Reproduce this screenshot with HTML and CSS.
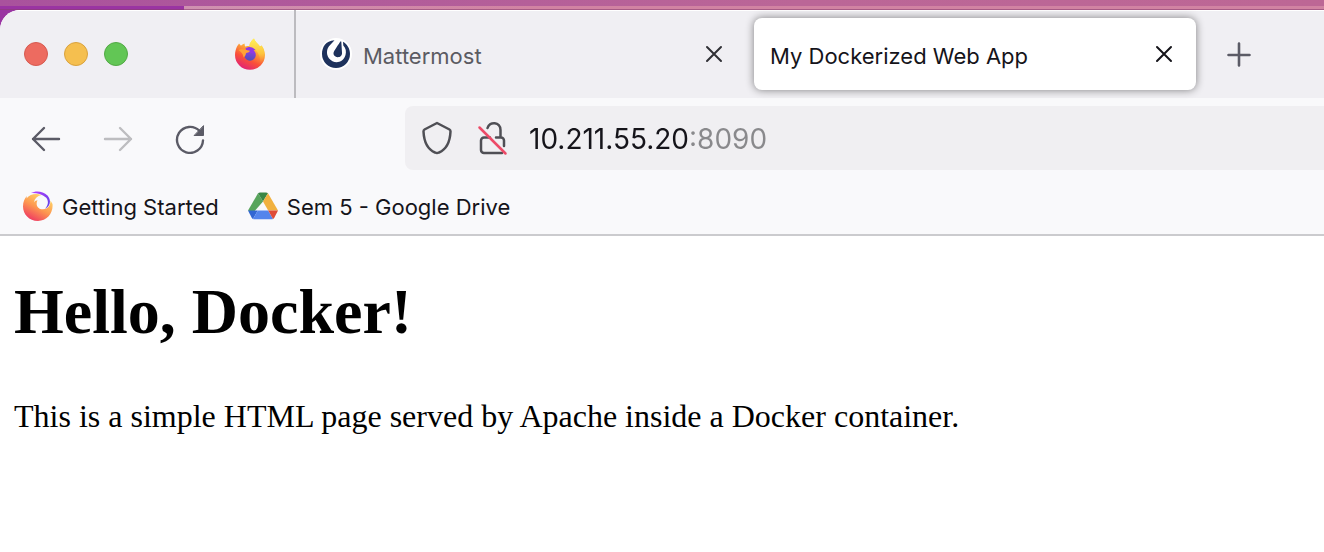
FILE: index.html
```html
<!DOCTYPE html>
<html lang="en">
<head>
<meta charset="utf-8">
<title>My Dockerized Web App</title>
<link rel="stylesheet" href="styles.css">
</head>
<body>
<div class="desktop">
<div class="menubar"></div>
<div class="wallpaper"></div>
<div class="window">
  <header class="tabbar">
    <div class="lights">
      <button class="light red" aria-label="Close window"></button>
      <button class="light yellow" aria-label="Minimize window"></button>
      <button class="light green" aria-label="Zoom window"></button>
    </div>
    <button class="pinned" aria-label="Firefox">
      <svg width="32" height="32" viewBox="-1 0 32 32">
        <defs>
          <linearGradient id="fox" x1="0.8" y1="0" x2="0.3" y2="1"><stop offset="0" stop-color="#fff04f"/><stop offset=".35" stop-color="#fdb13a"/><stop offset=".68" stop-color="#fa5138"/><stop offset="1" stop-color="#e0207a"/></linearGradient>
          <linearGradient id="globe" x1="0.6" y1="0" x2="0.4" y2="1"><stop offset="0" stop-color="#9a3cea"/><stop offset="1" stop-color="#4b50b8"/></linearGradient>
          <linearGradient id="flame" x1="0" y1="0" x2="0" y2="1"><stop offset="0" stop-color="#fff15a"/><stop offset=".6" stop-color="#fdc33c"/><stop offset="1" stop-color="#fb8636" stop-opacity="0"/></linearGradient>
        </defs>
        <path fill="url(#fox)" d="M3 8.500C4 7 4.500 6.500 5 5.500L7 7.800C8 6.800 9 6 10.500 5.500L11 8.500C13 7.500 14 8 15.500 8C15.500 5 17.500 2.500 20 .5C21 4 24 5.500 26 8.500L27.500 7.500C29 9 31 13 31 17A15 14.800 0 0 1 1 17C1 13.500 2 10.500 3 8.500Z"/>
        <path fill="url(#flame)" d="M15.500 8C15.500 5 17.500 2.500 20 .5C21 4 24 5.500 26 8.500L27.500 7.500C31 12 31 20 26 26C27 20 24 13 20 11C17 10 15.500 9.500 15.500 8Z"/>
        <circle cx="16" cy="17" r="5.800" fill="url(#globe)"/>
        <path fill="#9038e6" d="M11.500 10.500C14 8.200 18 8.500 20.500 11L21.500 12L19.500 12.300L21.500 15.500L13 14.500Z"/>
        <path fill="#ffa436" d="M4.500 12C8 10.500 11 12 16 12.700C15.500 14.500 13 14.500 12 15.200C11.700 17.500 10.700 18.500 9.500 19.500C9.500 16 7 14 4.500 12Z"/>
      </svg>
    </button>
    <div class="tab">
      <svg class="favicon" width="32" height="32" viewBox="0 0 32 32">
        <circle cx="16" cy="16" r="16" fill="#fff"/>
        <path fill="#1e325c" d="M14.500 2.300C5.500 2.700 2 9.500 2 16A14 14 0 0 0 30 16C30 10.500 27.500 6.500 23 3.700L23.300 7.500C26 10.500 26.400 13.500 25.500 17C23.500 24 17 25.500 12.500 23.200C6.500 20 5.500 13 9 8.300Z"/>
        <path fill="#1e325c" d="M20.500 3.500C20.900 3.100 21.300 3.300 21.300 3.800L22 14.500C22.300 17.500 20.200 19.300 17.700 19.200C14.500 19 12.500 16.300 14 13.500C15 11.500 18.500 6.200 20.500 3.500Z"/>
      </svg>
      <span class="label">Mattermost</span>
      <button class="close" aria-label="Close Mattermost tab"><svg width="18" height="18" viewBox="0 0 18 18"><path d="M2 2L16 16M16 2L2 16"/></svg></button>
    </div>
    <div class="tab active">
      <span class="label">My Dockerized Web App</span>
      <button class="close" aria-label="Close My Dockerized Web App tab"><svg width="18" height="18" viewBox="0 0 18 18"><path d="M2 2L16 16M16 2L2 16"/></svg></button>
    </div>
    <button class="newtab" aria-label="New tab"><svg width="26" height="26" viewBox="0 0 26 26" stroke-width="2.600"><path d="M13 2.500V24.500M2.500 14H23.500"/></svg></button>
  </header>

  <div class="toolbar">
    <div class="nav">
      <button aria-label="Back"><svg width="32" height="32" viewBox="0 0 32 32" stroke-width="2.400"><path d="M14 6L3 17L14 28M3 17H29"/></svg></button>
      <button aria-label="Forward" disabled><svg width="32" height="32" viewBox="0 0 32 32" stroke-width="2.400"><path d="M18 6L29 17L18 28M29 17H3"/></svg></button>
      <button aria-label="Reload"><svg width="32" height="32" viewBox="0 0 32 32" stroke-width="2.400"><path d="M25.500 9A13 13 0 1 0 29 18.500"/><path class="solid" d="M29.500 4V13.500H20.500Z"/></svg></button>
    </div>
    <div class="urlbar">
      <svg width="32" height="36" viewBox="0 0 32 36" stroke-width="2.500"><path d="M16 3L28.500 9.500C29.500 10 29.500 10.500 29.500 11.500C29 22 25 29.500 18 32.500Q16 33.500 14 32.500C7 29.500 3 22 2.500 11.500C2.500 10.500 2.500 10 3.500 9.500Z"/></svg>
      <svg width="32" height="36" viewBox="-1 0 32 36" stroke-width="2.500"><path d="M9.500 8C11.500 1 22.500 1.500 22.500 10V17.500M12 17.500H6A3 3 0 0 0 3 20.500V30A3 3 0 0 0 6 33H24M18 17.500H23A3 3 0 0 1 26 20.500V26"/><path class="slash" d="M1.500 7.500L27.500 33.500"/></svg>
      <input class="address" type="text" value="10.211.55.20:8090" aria-label="Address">
    </div>
  </div>

  <nav class="bookmarks" aria-label="Bookmarks">
    <a href="#">
      <svg width="30" height="30" viewBox="0 0 30 30">
        <defs>
          <linearGradient id="swirl" x1=".75" y1=".1" x2=".25" y2=".95"><stop offset="0" stop-color="#ffd567"/><stop offset=".5" stop-color="#fd9650"/><stop offset="1" stop-color="#ef3c62"/></linearGradient>
          <linearGradient id="tail" x1="0" y1="0" x2="1" y2="1"><stop offset="0" stop-color="#b73fff"/><stop offset="1" stop-color="#5940e4"/></linearGradient>
        </defs>
        <path fill="url(#swirl)" d="M4 5L3.500 7.500C7 3 13 2 18.500 4C14 5 11.500 7.500 11 11.500C12 10 13 9.500 14.500 9.300C12 14.500 15.500 18.500 20 18.300C25 18 27.500 14.500 27.500 9.500L29.500 13C30.500 22 24 30 15 30C6 30 0 23 0 15.500C0 11 1.500 7.500 4 5Z"/>
        <path fill="url(#tail)" d="M8 2C13-.8 20 .2 24.500 4.500C28.500 9 27.500 15.500 22 17.800C25.500 14 25.800 9.500 23 6.500C19 2.800 13 1.700 8 2Z"/>
      </svg>
      <span>Getting Started</span>
    </a>
    <a href="#">
      <svg width="30" height="30" viewBox="0 0 30 30">
        <path fill="#58a55c" d="M10 2.300L0 19.500L5 22L15 10.500Z"/>
        <path fill="#3a8644" d="M10 2.300Q11 1.500 12 1.500H18Q19 1.500 20 2.300L15 10.500Z"/>
        <path fill="#f1b13f" d="M20 2.300L30 19.500L20.200 19.500L15 10.500Z"/>
        <path fill="#3267d3" d="M0 19.500H9.800L5 28Q4.200 27.600 3.700 26.800Z"/>
        <path fill="#5485ec" d="M9.800 19.500H20.200L25 28Q24.500 28.200 23.500 28.200H6.500Q5.500 28.200 5 28Z"/>
        <path fill="#df4b38" d="M20.200 19.500H30L26.300 26.800Q25.800 27.600 25 28Z"/>
      </svg>
      <span>Sem 5 - Google Drive</span>
    </a>
  </nav>

  <main class="page">
    <h1>Hello, Docker!</h1>
    <p>This is a simple HTML page served by Apache inside a Docker container.</p>
  </main>
</div>
</div>
</body>
</html>
```
FILE: styles.css
```css
* { box-sizing: border-box; }
body { margin: 0; background: #fff; color: #15141a; font-family: Inter, "Liberation Sans", sans-serif; font-size: 22px; overflow-x: hidden; }
button { border: 0; padding: 0; background: none; display: flex; align-items: center; justify-content: center; }
svg { display: block; flex: none; fill: none; stroke-linecap: round; stroke-linejoin: round; }

.desktop { background: linear-gradient(to right, #9a34a2 184px, transparent 184px) 0 0 / 100% 30px no-repeat; }
.menubar { height: 6px; background: linear-gradient(to right, #a9529d, #bb6697 60%, #bd6795); }
.wallpaper { height: 4px; background: linear-gradient(to right, #9a34a2 184px, #cf91b0 184px, #d183a2 40%, #d183a2); box-shadow: inset 0 -1px #8b3f7299; }

.window { border-radius: 20px 0 0 0; overflow: hidden; background: #fff; }
.tabbar { display: flex; align-items: center; height: 88px; background: #f0eff3; box-shadow: inset 0 1px #fff; }
.lights { display: flex; gap: 16px; padding-left: 24px; width: 204px; flex: none; }
.light { width: 24px; height: 24px; border-radius: 50%; border: 1px solid; }
.red { background: #ed6b60; border-color: #d65a50; }
.yellow { background: #f5bf4f; border-color: #d9a23e; }
.green { background: #62c655; border-color: #52a945; }
.pinned { width: 92px; height: 100%; flex: none; border-right: 2px solid #bcbbbf; }
.tab { display: flex; align-items: center; gap: 11px; flex: 0 1 442px; height: 72px; padding: 0 15px 0 24px; color: #5b5b62; }
.tab:not(.active) { margin-right: 16px; }
.label { flex: 1; white-space: nowrap; padding-top: 4px; }
.close { width: 18px; height: 18px; stroke: #303035; stroke-width: 2; }
.tab.active { background: #fff; color: #15141a; border-radius: 8px; padding: 0 23px 0 16px; box-shadow: 0 0 8px #0000007a; }
.active .close { stroke: #15141a; }
.newtab { width: 86px; height: 72px; stroke: #5b5b66; }

.toolbar { display: flex; align-items: center; height: 80px; background: #f9f9fb; }
.nav { display: flex; gap: 40px; padding-left: 30px; width: 405px; flex: none; stroke: #5b5b66; }
.nav button:disabled { stroke: #bdbdc0; }
.solid { fill: #5b5b66; stroke-width: 1; }
.urlbar { display: flex; align-items: center; gap: 24px; flex: 1; height: 64px; padding-left: 16px; background: #f0eff2; border-radius: 8px 0 0 8px; stroke: #4f4f55; }
.slash { stroke: #ed4b68; }
.address { flex: 1; min-width: 0; border: 0; margin-left: -4px; padding: 2px 0 0; outline: 0; font: 28px Inter, "Liberation Sans", sans-serif; color: #15141a; background: linear-gradient(to right, #15141a 160px, #89898c 160px); -webkit-background-clip: text; background-clip: text; -webkit-text-fill-color: transparent; }

.bookmarks { display: flex; gap: 29px; height: 58px; padding: 0 23px; background: #f9f9fb; border-bottom: 2px solid #cbcbce; }
.bookmarks a { display: flex; align-items: center; gap: 9px; color: #15141a; text-decoration: none; white-space: nowrap; }
.bookmarks span { padding-top: 2px; }

.page { padding: 40px 14px; font-family: "Liberation Serif", serif; color: #000; }
h1 { margin: 0; font-size: 64px; line-height: 72px; }
p { margin: 48px 0 0; font-size: 32px; line-height: 40px; }
```
